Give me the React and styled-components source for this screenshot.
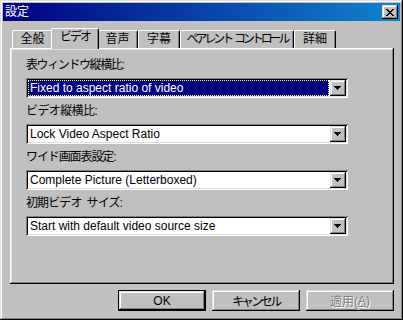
import React from "react";
import styled, { createGlobalStyle, css } from "styled-components";

const GlobalStyle = createGlobalStyle`
  html, body { margin: 0; padding: 0; background: #c0c0c0; }
  body {
    font-family: "Liberation Sans", "Noto Sans CJK JP", sans-serif;
    font-size: 12px;
    color: #000;
  }
`;

const raised = css`
  box-shadow: inset -1px -1px #000, inset 1px 1px #dfdfdf,
    inset -2px -2px #808080, inset 2px 2px #fff;
`;

const Window = styled.div`
  width: 403px;
  height: 320px;
  box-sizing: border-box;
  padding: 3px;
  background: #c0c0c0;
  ${raised};
  display: flex;
  flex-direction: column;
`;

const TitleBar = styled.div`
  height: 18px;
  flex: none;
  display: flex;
  align-items: center;
  justify-content: space-between;
  padding: 0 2px;
  background: linear-gradient(to right, #000080, #1084d0);
  color: #fff;
`;

const Title = styled.span`
  line-height: 18px;
  font-size: 12px;
`;

const CloseButton = styled.div`
  width: 16px;
  height: 14px;
  box-sizing: border-box;
  background: #c0c0c0;
  ${raised};
  display: flex;
  align-items: center;
  justify-content: center;
  padding-right: 1px;
`;

const Body = styled.div`
  flex: 1;
  display: flex;
  flex-direction: column;
  padding: 7px 6px 0 7px;
`;

const TabStrip = styled.div`
  display: flex;
  align-items: flex-end;
  height: 20px;
  padding-left: 2px;
`;

const Tab = styled.div`
  box-sizing: border-box;
  width: ${(p) => p.$w}px;
  height: 18px;
  border-top: 1px solid #fff;
  border-left: 1px solid #fff;
  border-right: 1px solid #000;
  border-radius: 2px 2px 0 0;
  box-shadow: inset -1px 0 #808080;
  background: #c0c0c0;
  display: flex;
  justify-content: center;
  line-height: 15px;
  padding-top: 1px;
  white-space: nowrap;
  overflow: hidden;
  letter-spacing: ${(p) => p.$ls || 0}px;
  ${(p) =>
    p.$active &&
    css`
      width: ${p.$w + 4}px;
      height: 21px;
      margin: 0 -2px -1px;
      position: relative;
      z-index: 1;
    `}
`;

const Pane = styled.div`
  box-sizing: border-box;
  width: 384px;
  height: 236px;
  padding: 10px 0 0 16px;
  box-shadow: inset -1px -1px #000, inset 1px 1px #fff,
    inset -2px -2px #808080, inset 2px 2px #dfdfdf;
  display: flex;
  flex-direction: column;
  gap: 6px;
`;

const Group = styled.div`
  display: flex;
  flex-direction: column;
  gap: 6px;
`;

const Label = styled.div`
  line-height: 14px;
  white-space: nowrap;
  letter-spacing: ${(p) => p.$ls || 0}px;
`;

const Combo = styled.div`
  width: 322px;
  height: 20px;
  box-sizing: border-box;
  padding: 2px;
  background: #fff;
  box-shadow: inset 1px 1px #808080, inset -1px -1px #fff,
    inset 2px 2px #000, inset -2px -2px #dfdfdf;
  display: flex;
`;

const Field = styled.div`
  flex: 1;
  box-sizing: border-box;
  padding-left: 2px;
  line-height: 16px;
  white-space: nowrap;
  overflow: hidden;
  ${(p) =>
    p.$selected &&
    css`
      background: #000080;
      color: #fff;
      outline: 1px dotted #ffff60;
      outline-offset: -1px;
      margin-right: 1px;
    `}
`;

const DropButton = styled.div`
  width: 16px;
  height: 16px;
  flex: none;
  box-sizing: border-box;
  background: #c0c0c0;
  ${raised};
  display: flex;
  align-items: center;
  justify-content: center;
  padding: 0 1px 1px 0;
`;

const Footer = styled.div`
  display: flex;
  justify-content: flex-end;
  gap: 6px;
  margin-top: 6px;
`;

const Button = styled.div`
  width: 88px;
  height: 21px;
  box-sizing: border-box;
  background: #c0c0c0;
  ${raised};
  display: flex;
  align-items: center;
  justify-content: center;
  white-space: nowrap;
  letter-spacing: ${(p) => p.$ls || 0}px;
  ${(p) =>
    p.$default &&
    css`
      border: 1px solid #000;
    `}
  ${(p) =>
    p.$disabled &&
    css`
      color: #808080;
      text-shadow: 1px 1px #fff;
    `}
`;

const CloseGlyph = () => (
  <svg width="8" height="7" viewBox="0 0 8 7" shapeRendering="crispEdges">
    <g fill="#000">
      <rect x="0" y="0" width="2" height="1" />
      <rect x="6" y="0" width="2" height="1" />
      <rect x="1" y="1" width="2" height="1" />
      <rect x="5" y="1" width="2" height="1" />
      <rect x="2" y="2" width="4" height="1" />
      <rect x="3" y="3" width="2" height="1" />
      <rect x="2" y="4" width="4" height="1" />
      <rect x="1" y="5" width="2" height="1" />
      <rect x="5" y="5" width="2" height="1" />
      <rect x="0" y="6" width="2" height="1" />
      <rect x="6" y="6" width="2" height="1" />
    </g>
  </svg>
);

const Arrow = () => (
  <svg width="7" height="4" viewBox="0 0 7 4" shapeRendering="crispEdges">
    <g fill="#000">
      <rect x="0" y="0" width="7" height="1" />
      <rect x="1" y="1" width="5" height="1" />
      <rect x="2" y="2" width="3" height="1" />
      <rect x="3" y="3" width="1" height="1" />
    </g>
  </svg>
);

const tabs = [
  { label: "全般", w: 41 },
  { label: "ビデオ", w: 44, ls: -2, active: true },
  { label: "音声", w: 41 },
  { label: "字幕", w: 42 },
  { label: "ペアレント\u2002コントロール", w: 114, ls: -3.1 },
  { label: "詳細", w: 42 },
];

const groups = [
  { label: "表ウィンドウ縦横比:", ls: -1.4, value: "Fixed to aspect ratio of video", selected: true },
  { label: "ビデオ縦横比:", ls: -0.6, value: "Lock Video Aspect Ratio" },
  { label: "ワイド画面表設定:", ls: -1.1, value: "Complete Picture (Letterboxed)" },
  { label: "初期ビデオ\u2002サイズ:", ls: -0.9, value: "Start with default video source size" },
];

export default function App() {
  return (
    <>
      <GlobalStyle />
      <Window>
        <TitleBar>
          <Title>設定</Title>
          <CloseButton>
            <CloseGlyph />
          </CloseButton>
        </TitleBar>
        <Body>
          <TabStrip>
            {tabs.map((t) => (
              <Tab key={t.label} $w={t.w} $ls={t.ls} $active={t.active}>
                {t.label}
              </Tab>
            ))}
          </TabStrip>
          <Pane>
            {groups.map((g) => (
              <Group key={g.label}>
                <Label $ls={g.ls}>{g.label}</Label>
                <Combo>
                  <Field $selected={g.selected}>{g.value}</Field>
                  <DropButton>
                    <Arrow />
                  </DropButton>
                </Combo>
              </Group>
            ))}
          </Pane>
          <Footer>
            <Button $default>OK</Button>
            <Button $ls={-2.5}>キャンセル</Button>
            <Button $disabled>
              適用(<u>A</u>)
            </Button>
          </Footer>
        </Body>
      </Window>
    </>
  );
}
